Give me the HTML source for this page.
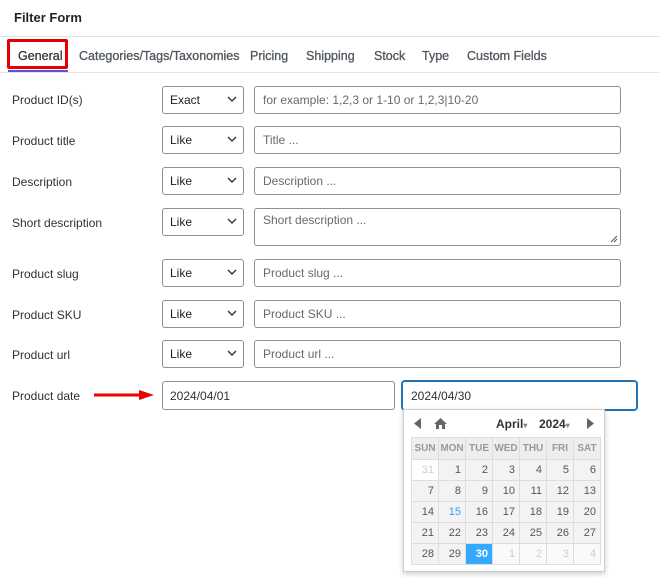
<!DOCTYPE html><html><head><style>
body{margin:0;width:659px;height:583px;background:#fff;font-family:"Liberation Sans",sans-serif;font-size:12px;color:#1e1e1e;position:relative;overflow:hidden}
.a{position:absolute}
.lbl{position:absolute;left:12px;font-size:12px;color:#2c3338}
.sel{position:absolute;left:162px;width:80px;height:26px;border:1px solid #8c8f94;border-radius:3px;box-sizing:content-box}
.sel span{position:absolute;left:7px;top:6px;font-size:12px}
.sel svg{position:absolute;right:6px;top:9px}
.inp{position:absolute;left:254px;width:365px;height:26px;border:1px solid #8c8f94;border-radius:3px}
.inp span{position:absolute;left:8px;top:6px;color:#646970;font-size:12px}
.tab{position:absolute;top:49px;font-size:12.5px;color:#50575e;-webkit-text-stroke:0.3px #50575e}
table{border-collapse:collapse;position:absolute;left:411px;top:437px}
td{width:26px;height:21px;border:1px solid #ddd;background:#f3f3f3;text-align:right;padding:0 4px 0 0;font-size:11px;color:#555;box-sizing:border-box}
th{height:21px;border:1px solid #ddd;background:#eee;font-size:10px;color:#999;font-weight:bold;width:26px;padding:0}
td.o{color:#ccc;background:#fafafa}
</style></head><body>
<div class="a" style="left:14px;top:10px;font-size:13px;color:#1d2327;font-weight:bold">Filter Form</div>
<div class="a" style="left:0;top:36px;width:659px;height:1px;background:#e2e2e2"></div>
<div class="a" style="left:0;top:72px;width:659px;height:1px;background:#e2e2e2"></div>
<div class="a" style="left:7px;top:39px;width:55px;height:24px;border:3px solid #e60000;border-radius:2px"></div>
<div class="a" style="left:8px;top:70px;width:60px;height:2px;background:#6a4bd6"></div>
<div class="tab" style="left:18px;color:#1d2327">General</div>
<div class="tab" style="left:79px">Categories/Tags/Taxonomies</div>
<div class="tab" style="left:250px">Pricing</div>
<div class="tab" style="left:306px">Shipping</div>
<div class="tab" style="left:374px">Stock</div>
<div class="tab" style="left:422px">Type</div>
<div class="tab" style="left:467px">Custom Fields</div>

<div class="lbl" style="top:93px">Product ID(s)</div>
<div class="sel" style="top:86px"><span>Exact</span><svg width="10" height="6"><path d="M1 1l4 4 4-4" stroke="#333" fill="none" stroke-width="1.4"/></svg></div>
<div class="inp" style="top:86px"><span>for example: 1,2,3 or 1-10 or 1,2,3|10-20</span></div>

<div class="lbl" style="top:134px">Product title</div>
<div class="sel" style="top:126px"><span>Like</span><svg width="10" height="6"><path d="M1 1l4 4 4-4" stroke="#333" fill="none" stroke-width="1.4"/></svg></div>
<div class="inp" style="top:126px"><span>Title ...</span></div>

<div class="lbl" style="top:175px">Description</div>
<div class="sel" style="top:167px"><span>Like</span><svg width="10" height="6"><path d="M1 1l4 4 4-4" stroke="#333" fill="none" stroke-width="1.4"/></svg></div>
<div class="inp" style="top:167px"><span>Description ...</span></div>

<div class="lbl" style="top:216px">Short description</div>
<div class="sel" style="top:208px"><span>Like</span><svg width="10" height="6"><path d="M1 1l4 4 4-4" stroke="#333" fill="none" stroke-width="1.4"/></svg></div>
<div class="inp" style="top:208px;height:36px"><span style="top:4px">Short description ...</span><svg class="a" style="right:2px;bottom:2px" width="8" height="8"><path d="M1 7L7 1M4 7L7 4" stroke="#555"/></svg></div>

<div class="lbl" style="top:267px">Product slug</div>
<div class="sel" style="top:259px"><span>Like</span><svg width="10" height="6"><path d="M1 1l4 4 4-4" stroke="#333" fill="none" stroke-width="1.4"/></svg></div>
<div class="inp" style="top:259px"><span>Product slug ...</span></div>

<div class="lbl" style="top:308px">Product SKU</div>
<div class="sel" style="top:300px"><span>Like</span><svg width="10" height="6"><path d="M1 1l4 4 4-4" stroke="#333" fill="none" stroke-width="1.4"/></svg></div>
<div class="inp" style="top:300px"><span>Product SKU ...</span></div>

<div class="lbl" style="top:348px">Product url</div>
<div class="sel" style="top:340px"><span>Like</span><svg width="10" height="6"><path d="M1 1l4 4 4-4" stroke="#333" fill="none" stroke-width="1.4"/></svg></div>
<div class="inp" style="top:340px"><span>Product url ...</span></div>

<div class="lbl" style="top:389px">Product date</div>
<svg class="a" style="left:93px;top:389px" width="62" height="12"><path d="M1 6H48" stroke="#e00" stroke-width="3"/><path d="M46 1L61 6L46 11Z" fill="#e00"/></svg>
<div class="a" style="left:162px;top:381px;width:231px;height:27px;border:1px solid #8c8f94;border-radius:3px"><span class="a" style="left:7px;top:7px;color:#2c3338">2024/04/01</span></div>
<div class="a" style="left:402px;top:381px;width:233px;height:27px;border:1px solid #2271b1;border-radius:3px;box-shadow:0 0 0 1px #2271b1"><span class="a" style="left:8px;top:7px;color:#2c3338">2024/04/30</span></div>

<div class="a" style="left:403px;top:409px;width:200px;height:161px;background:#fff;border:1px solid #ccc;box-shadow:0 2px 5px rgba(0,0,0,.2)"></div>
<svg class="a" style="left:414px;top:418px" width="8" height="11"><path d="M7 0V11L0 5.5Z" fill="#666"/></svg>
<svg class="a" style="left:434px;top:418px" width="13" height="11"><path d="M6.5 0L13 6H11V11H8V7H5V11H2V6H0Z" fill="#666"/></svg>
<div class="a" style="left:496px;top:417px;font-size:12px;font-weight:bold;color:#333">April<span style="font-size:8px;color:#888">▾</span></div>
<div class="a" style="left:539px;top:417px;font-size:12px;font-weight:bold;color:#333">2024<span style="font-size:8px;color:#888">▾</span></div>
<svg class="a" style="left:587px;top:418px" width="8" height="11"><path d="M0 0V11L7 5.5Z" fill="#666"/></svg>
<table>
<tr><th>SUN</th><th>MON</th><th>TUE</th><th>WED</th><th>THU</th><th>FRI</th><th>SAT</th></tr>
<tr><td class="o" style="background:#fff">31</td><td>1</td><td>2</td><td>3</td><td>4</td><td>5</td><td>6</td></tr>
<tr><td>7</td><td>8</td><td>9</td><td>10</td><td>11</td><td>12</td><td>13</td></tr>
<tr><td>14</td><td style="color:#3399ff">15</td><td>16</td><td>17</td><td>18</td><td>19</td><td>20</td></tr>
<tr><td>21</td><td>22</td><td>23</td><td>24</td><td>25</td><td>26</td><td>27</td></tr>
<tr><td>28</td><td>29</td><td style="background:#33aaff;color:#fff;font-weight:bold">30</td><td class="o">1</td><td class="o">2</td><td class="o">3</td><td class="o">4</td></tr>
</table>
</body></html>
